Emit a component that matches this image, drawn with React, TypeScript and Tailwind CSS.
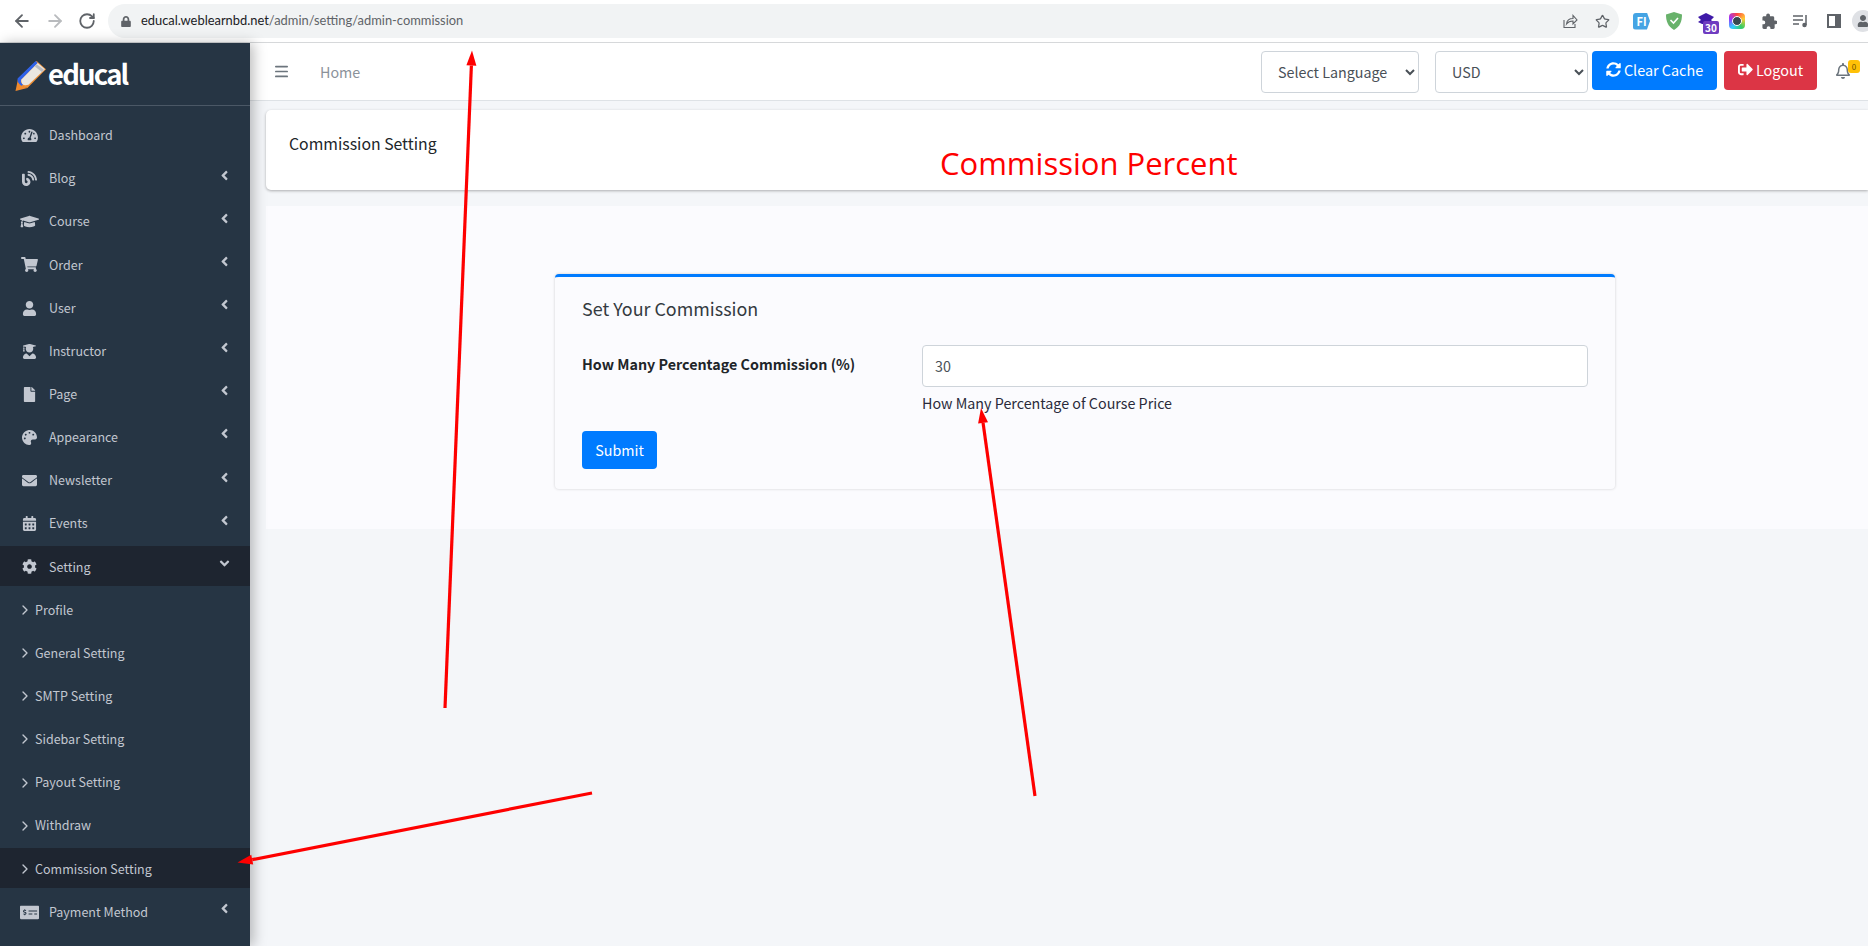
import React from "react";
import { ArrowLeft, ArrowRight, RotateCw, ChevronRight, Star, Menu } from "lucide-react";
import {
  FaTachometerAlt, FaBlog, FaGraduationCap, FaShoppingCart, FaUser, FaUserGraduate, FaFile, FaPalette,
  FaEnvelope, FaCalendarAlt, FaCog, FaAngleLeft, FaAngleDown, FaMoneyCheckAlt, FaSyncAlt, FaSignOutAlt,
  FaRegBell, FaLock,
} from "react-icons/fa";

const font = { fontFamily: '"Noto Sans CJK SC", "Noto Sans", sans-serif' };

const top1: [string, React.ComponentType<{ className?: string }>, boolean][] = [
  ["Dashboard", FaTachometerAlt, false],
  ["Blog", FaBlog, true],
  ["Course", FaGraduationCap, true],
  ["Order", FaShoppingCart, true],
  ["User", FaUser, true],
  ["Instructor", FaUserGraduate, true],
  ["Page", FaFile, true],
  ["Appearance", FaPalette, true],
  ["Newsletter", FaEnvelope, true],
  ["Events", FaCalendarAlt, true],
];
const subs = ["Profile", "General Setting", "SMTP Setting", "Sidebar Setting", "Payout Setting", "Withdraw", "Commission Setting"];

function Row({ label, Icon, caret, active, wide }: { label: string; Icon: React.ComponentType<{ className?: string }>; caret?: boolean; active?: boolean; wide?: boolean }) {
  return (
    <div className={`h-10 flex items-center pl-[21px] pr-[19px] pt-px text-[12.5px] text-[#c2c7d0] ${active ? "bg-[#1e2530]" : ""}`}>
      <span className="w-[28px] flex justify-start items-center shrink-0">
        <Icon className={wide ? "w-[19px] h-[17px] -ml-[1px] text-[#c2c7d0]" : "w-[17px] h-[15px] text-[#c2c7d0]"} />
      </span>
      <span className="flex-1">{label}</span>
      {caret && <FaAngleLeft className="w-[13px] h-[15px] -mt-[7px]" />}
      {active && <FaAngleDown className="w-[15px] h-[15px] -mt-[7px] -mr-px" />}
    </div>
  );
}

function Sidebar() {
  return (
    <aside className="w-[250px] shrink-0 bg-[#263544] flex flex-col z-10 shadow-[4px_0_12px_rgba(0,0,0,0.25)]">
      <div className="h-[63px] border-b border-[#4b5866] flex items-center pl-[15px] gap-[2px] shrink-0">
        <svg width="31" height="31" viewBox="0 0 30 30" className="mt-[2px]">
          <path d="M0.500 30 L3 18 Q4 25 12 27 Z" fill="#f08a2c" />
          <path d="M3 18 L21 1 L30 9 L12 27 Q4 26 3 18 Z" fill="#ef8f35" />
          <path d="M2.500 18 L20 1 L22 3 L6 19 Q5 22 8 24 L6 25 Q2 22 2.500 18 Z" fill="#2f62e8" />
          <path d="M6 19 L22 3 L29 9 L13 24 Q6 26 6 19 Z" fill="#e9e6e0" />
          <path d="M21 4 L28 9.500 L26 11.500 L19 6 Z" fill="#b9bcc2" />
        </svg>
        <span className="text-white font-bold text-[27.5px] leading-none tracking-[-1.8px]" style={font}>educal</span>
      </div>
      <nav className="mt-[9px] flex flex-col gap-[3.15px]">
        {top1.map(([l, I, c]) => <Row key={l} label={l} Icon={I} caret={c} wide={l === "Course"} />)}
        <Row label="Setting" Icon={FaCog} active />
        {subs.map((s) => (
          <div key={s} className={`h-10 flex items-center pl-[17px] pt-px text-[12.5px] text-[#c2c7d0] ${s === "Commission Setting" ? "bg-[#1e2530]" : ""}`}>
            <ChevronRight className="w-[16px] h-[16px] mr-[2px] shrink-0" strokeWidth={2} />
            <span>{s}</span>
          </div>
        ))}
        <Row label="Payment Method" Icon={FaMoneyCheckAlt} caret wide />
      </nav>
    </aside>
  );
}

function BrowserBar() {
  return (
    <div className="h-[43px] bg-white border-b border-[#d6d8da] flex items-center shrink-0">
      <div className="flex items-center w-[108px] pl-[12px] gap-[13px] text-[#5f6368]">
        <ArrowLeft className="w-[20px] h-[20px]" strokeWidth={2.2} />
        <ArrowRight className="w-[20px] h-[20px] text-[#b9bbbe]" strokeWidth={2.2} />
        <RotateCw className="w-[18px] h-[18px]" strokeWidth={2.4} />
      </div>
      <div className="w-[1511px] h-[34px] rounded-full bg-[#f1f3f4] flex items-center pl-[13px] pr-[9px] shrink-0">
        <FaLock className="w-[10px] h-[11px] text-[#5f6368] mr-[10px]" />
        <span className="text-[12.9px] text-[#202124]" style={{ fontFamily: 'Lato, sans-serif' }}>
          educal.weblearnbd.net<span className="text-[#5f6368]">/admin/setting/admin-commission</span>
        </span>
        <svg width="16" height="16" viewBox="0 0 16 16" fill="none" stroke="#5f6368" strokeWidth="1.1" className="ml-auto mr-[17px]">
          <path d="M2 7v7.5h11V11" />
          <path d="M4.5 11c.5-4 3-5.500 6.500-5.500V2.500L15 7l-4 4V8c-3 0-5 1-6.500 3z" />
        </svg>
        <Star className="w-[15px] h-[15px] text-[#5f6368]" strokeWidth={2} />
      </div>
      <div className="flex-1 flex items-center pl-[14px] gap-[16px] overflow-hidden h-full">
        <span className="w-[17px] h-[17px] bg-[#45a4e4] [clip-path:polygon(0_0,82%_0,100%_50%,82%_100%,0_100%)] rounded-l-[3px] text-white text-[11px] leading-[17px] text-center font-bold shrink-0" style={font}>FI</span>
        <svg width="16" height="18" viewBox="0 0 16 18" className="shrink-0">
          <path d="M8 0l8 2.500c0 7-2 12-8 15.500C2 14.500 0 9.500 0 2.500z" fill="#68b26b" />
          <path d="M4.500 8l3 3 4.500-5" stroke="#fff" strokeWidth="1.600" fill="none" />
        </svg>
        <span className="relative w-[16px] h-[16px] shrink-0">
          <svg width="16" height="14" viewBox="0 0 16 14"><path d="M8 0l8 4-3 3 3 3-4 1H4L0 9l3-2-3-3z" fill="#3f1aa8" /></svg>
          <span className="absolute left-[5px] top-[8px] w-[16px] h-[13px] rounded-[2px] bg-[#6f3cc0] text-white text-[10px] leading-[13px] text-center font-bold" style={font}>30</span>
        </span>
        <span className="w-[16px] h-[16px] -ml-[1px] rounded-[4px] bg-[conic-gradient(#f44,#fc3,#3c6,#3cf,#93f,#f44)] flex items-center justify-center shrink-0">
          <span className="w-[10px] h-[10px] rounded-full bg-[#37474f] border border-white" />
        </span>
        <svg width="15" height="16" viewBox="0 0 15 17" fill="#5f6368" className="ml-px shrink-0">
          <path d="M13.500 8h-1V5c0-.8-.7-1.500-1.500-1.500H8V2.500a2 2 0 0 0-4 0v1H1.500C.7 3.500 0 4.200 0 5v3h1a2 2 0 0 1 0 4H0v3.500C0 16.300.7 17 1.500 17h3v-1a2 2 0 0 1 4 0v1h3c.8 0 1.500-.7 1.500-1.500V12h1a2 2 0 0 0 0-4z" />
        </svg>
        <svg width="16" height="14" viewBox="0 0 16 14" fill="none" stroke="#5f6368" strokeWidth="1.500" className="shrink-0">
          <path d="M0 2h10M0 6h10M0 10h6M13 1v10" />
          <circle cx="11.500" cy="11" r="1.500" fill="#5f6368" />
        </svg>
        <span className="w-[14px] h-[14px] ml-[2px] border-2 border-[#5f6368] border-r-[6px] shrink-0" />
        <span className="w-[22px] h-[22px] rounded-full bg-[#dfe1e5] -ml-[5px] flex justify-center items-center shrink-0">
          <FaUser className="w-[12px] h-[12px] text-[#5f6368]" />
        </span>
      </div>
    </div>
  );
}

function TopNav() {
  const sel = "h-[42px] bg-white border border-[#ced4da] rounded-[4px] text-[14.3px] text-[#495057] px-[12px] pb-[2px]";
  return (
    <div className="h-[58px] bg-white border-b border-[#dee2e6] flex items-start pt-[8px] shrink-0">
      <Menu className="w-[17px] h-[17px] text-[#6c757d] ml-[23px] mt-[12px]" strokeWidth={2.4} />
      <span className="text-[14.3px] text-[#8b929a] ml-[30px] mt-[10px]">Home</span>
      <select className={`${sel} ml-auto w-[158px]`} style={font} defaultValue="l"><option value="l">Select Language</option></select>
      <select className={`${sel} ml-[16px] w-[153px]`} style={font} defaultValue="u"><option value="u">USD</option></select>
      <button className="h-[39px] w-[125px] ml-[4px] rounded-[4px] bg-[#007bff] text-white text-[14.4px] flex items-center justify-center gap-[3px] pb-[2px]">
        <FaSyncAlt className="w-[15px] h-[15px]" />Clear Cache
      </button>
      <button className="h-[39px] w-[93px] ml-[7px] rounded-[4px] bg-[#dc3545] text-white text-[14.4px] flex items-center justify-center gap-[3px] pb-[2px]">
        <FaSignOutAlt className="w-[15px] h-[15px]" />Logout
      </button>
      <span className="relative ml-[19px] mr-[18px] mt-[12px] w-[14px] h-[17px]">
        <FaRegBell className="w-[14px] h-[16px] text-[#6c757d]" />
        <span className="absolute -top-[3px] left-[12px] w-[12px] h-[13px] rounded-[3px] bg-[#ffc107] text-[8px] leading-[13px] text-center text-[#6c5200]">0</span>
      </span>
    </div>
  );
}

function Arrow({ x1, y1, x2, y2 }: { x1: number; y1: number; x2: number; y2: number }) {
  const a = Math.atan2(y2 - y1, x2 - x1);
  const l = 15, w = 5;
  const bx = x2 - l * Math.cos(a), by = y2 - l * Math.sin(a);
  const nx = -Math.sin(a) * w, ny = Math.cos(a) * w;
  return (
    <g>
      <line x1={x1} y1={y1} x2={bx} y2={by} stroke="#fe0000" strokeWidth="3.2" />
      <polygon points={`${x2},${y2} ${bx + nx},${by + ny} ${bx - nx},${by - ny}`} fill="#fe0000" />
    </g>
  );
}

export default function App() {
  return (
    <div className="relative w-[1868px] h-[946px] overflow-hidden flex flex-col bg-[#f4f6f9] text-[#212529]" style={font}>
      <BrowserBar />
      <div className="flex flex-1 min-h-0">
        <Sidebar />
        <main className="flex-1 min-w-0 flex flex-col">
          <TopNav />
          <div className="ml-[16px] mt-[9px] h-[80px] bg-white rounded-l-[5px] shadow-[0_1px_3px_rgba(0,0,0,0.3)] flex items-center pl-[23px] text-[15.8px] text-[#212529] pb-[12px]">
            Commission Setting
          </div>
          <section className="ml-[16px] mt-[16px] h-[323px] bg-[#fbfbfe] pt-[68px] pl-[289px]">
            <div className="w-[1060px] h-[215px] bg-[#fbfbfe] rounded-[4px] border-t-[3px] border-[#007bff] shadow-[0_0_3px_rgba(0,0,0,0.18)] px-[27px] pt-[17px]">
              <h4 className="text-[17.9px] leading-[28px] text-[#343a40]">Set Your Commission</h4>
              <div className="flex mt-[23px]">
                <label className="w-[340px] font-bold text-[14.3px] leading-[24px] mt-[7px] text-[#212529]">How Many Percentage Commission (%)</label>
                <div className="flex-1">
                  <input readOnly value="30" className="w-full h-[42px] border border-[#ced4da] rounded-[4px] bg-white px-[12px] pb-[2px] text-[14.3px] text-[#495057]" />
                  <div className="text-[14.3px] leading-[24px] mt-[4px] text-[#2a2a3a]">How Many Percentage of Course Price</div>
                </div>
              </div>
              <button className="mt-[16px] w-[75px] h-[38px] rounded-[4px] bg-[#007bff] text-white text-[14.3px]">Submit</button>
            </div>
          </section>
        </main>
      </div>
      <div className="absolute z-20 left-[940px] top-[141px] text-[31px] leading-[44px] text-[#fe0000]" style={{ fontFamily: '"Open Sans", sans-serif' }}>Commission Percent</div>
      <svg className="absolute z-20 inset-0 pointer-events-none" width="1868" height="946">
        <Arrow x1={445} y1={708} x2={472} y2={50.5} />
        <Arrow x1={592} y1={793} x2={237.5} y2={862.5} />
        <Arrow x1={1035} y1={796} x2={981} y2={408} />
      </svg>
    </div>
  );
}
